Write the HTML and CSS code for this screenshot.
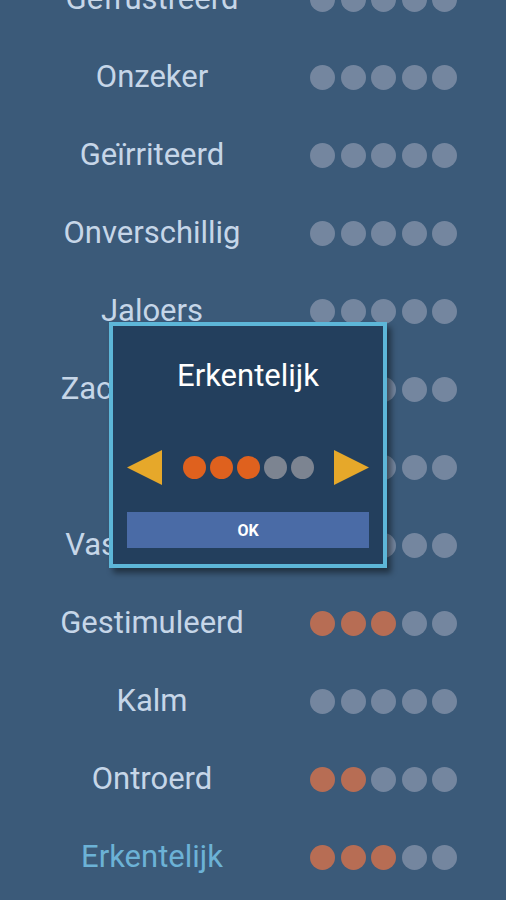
FILE: index.html
```html
<!DOCTYPE html>
<html>
<head>
	<meta charset="utf-8">
	<meta name="viewport" content="width=device-width, initial-scale=1">
	<title>Gevoelens</title>
	<link rel="stylesheet" href="styles.css">
</head>
<body>
	<!-- list of feelings, each with a score of five dots -->
	<ul class="list">
		<li class="row"><span class="label">Gefrustreerd</span><span class="dots"><i></i><i></i><i></i><i></i><i></i></span></li>
		<li class="row"><span class="label">Onzeker</span><span class="dots"><i></i><i></i><i></i><i></i><i></i></span></li>
		<li class="row"><span class="label">Geïrriteerd</span><span class="dots"><i></i><i></i><i></i><i></i><i></i></span></li>
		<li class="row"><span class="label">Onverschillig</span><span class="dots"><i></i><i></i><i></i><i></i><i></i></span></li>
		<li class="row"><span class="label">Jaloers</span><span class="dots"><i></i><i></i><i></i><i></i><i></i></span></li>
		<li class="row"><span class="label">Zachtmoedig</span><span class="dots"><i></i><i></i><i></i><i></i><i></i></span></li>
		<li class="row"><span class="label">Blij</span><span class="dots"><i></i><i></i><i></i><i></i><i></i></span></li>
		<li class="row"><span class="label">Vastberaden</span><span class="dots"><i></i><i></i><i></i><i></i><i></i></span></li>
		<li class="row"><span class="label">Gestimuleerd</span><span class="dots"><i class="on"></i><i class="on"></i><i class="on"></i><i></i><i></i></span></li>
		<li class="row"><span class="label">Kalm</span><span class="dots"><i></i><i></i><i></i><i></i><i></i></span></li>
		<li class="row"><span class="label">Ontroerd</span><span class="dots"><i class="on"></i><i class="on"></i><i></i><i></i><i></i></span></li>
		<li class="row active"><span class="label">Erkentelijk</span><span class="dots"><i class="on"></i><i class="on"></i><i class="on"></i><i></i><i></i></span></li>
	</ul>

	<!-- score dialog for the selected feeling -->
	<div class="dialog">
		<h2 class="title">Erkentelijk</h2>
		<div class="picker">
			<svg class="arrow" viewBox="0 0 35 35" width="35" height="35"><polygon points="0,17.5 35,0 35,35" fill="#e6a82a"></polygon></svg>
			<span class="score"><i class="on"></i><i class="on"></i><i class="on"></i><i></i><i></i></span>
			<svg class="arrow" viewBox="0 0 35 35" width="35" height="35"><polygon points="0,0 35,17.5 0,35" fill="#e6a82a"></polygon></svg>
		</div>
		<button class="ok">OK</button>
	</div>
</body>
</html>
```

FILE: styles.css
```css
* {
  box-sizing: border-box;
  padding: 0;
  margin: 0;
}
body {
  background: #3b5a79;
  font-family: Roboto, "Noto Sans", sans-serif;
  height: 900px;
  overflow: hidden;
  position: relative;
}

/* rows of 78px, the first one half cut by the top of the screen */
.list {
  list-style: none;
  margin-top: -40px;
}
.row {
  display: flex;
  align-items: center;
  height: 78px;
}
.label {
  width: 304px;
  text-align: center;
  font-size: 31px;
  line-height: 36px;
  color: #c6d6e8;
}
.row.active .label {
  color: #6cb2d6;
}
.dots {
  display: flex;
  gap: 5.5px;
  margin-left: 6px;
}
.dots i {
  width: 25px;
  height: 25px;
  border-radius: 50%;
  background: #74869f;
}
.dots i.on {
  background: #b76d54;
}

/* dialog lies over the list */
.dialog {
  position: absolute;
  left: 109px;
  top: 322px;
  width: 278px;
  height: 246px;
  background: #233f5d;
  border: 4px solid #5db6d8;
  box-shadow: 4px 5px 6px rgba(0, 0, 0, 0.45);
  display: flex;
  flex-direction: column;
  align-items: center;
  padding: 0 14px;
}
.title {
  font-weight: normal;
  font-size: 31px;
  color: #ffffff;
  margin-top: 32px;
  line-height: 36px;
}
.picker {
  display: flex;
  align-items: center;
  justify-content: space-between;
  width: 100%;
  margin-top: 56px;
}
.arrow {
  display: block;
}
.score {
  display: flex;
  gap: 4px;
}
.score i {
  width: 23px;
  height: 23px;
  border-radius: 50%;
  background: #7c8491;
}
.score i.on {
  background: #df611e;
}
.ok {
  width: 100%;
  height: 36px;
  margin-top: 27px;
  border: none;
  background: #4a6ba6;
  color: #ffffff;
  font-family: Roboto, sans-serif;
  font-weight: bold;
  font-size: 16px;
}
```
